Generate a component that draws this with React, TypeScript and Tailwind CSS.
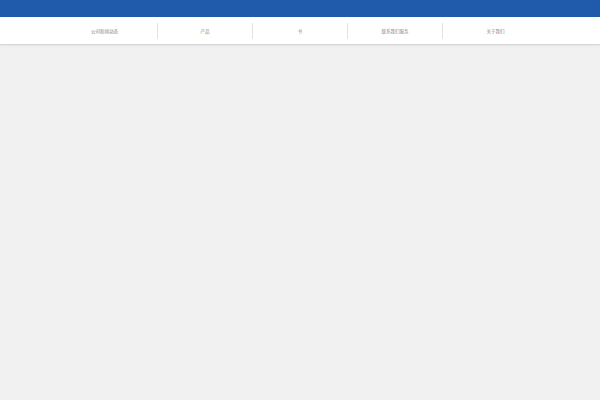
import React from 'react';

const navItems = [
  { label: '公司新闻动态', width: 'w-[105px]' },
  { label: '产品', width: 'w-[95px]' },
  { label: '书', width: 'w-[95px]' },
  { label: '联系我们服务', width: 'w-[95px]' },
  { label: '关于我们', width: 'w-[106px]' },
];

export default function App() {
  return (
    <div
      className="min-h-[400px] bg-[#f1f1f1]"
      style={{ fontFamily: '"Noto Sans CJK SC", "Noto Sans", sans-serif' }}
    >
      <div className="h-[17px] bg-[#1f5aab]" />
      <nav className="h-[28px] bg-white border-b border-[#d8d8d8] shadow-[0_1px_2px_rgba(0,0,0,0.06)] flex justify-center items-center">
        {navItems.map((item, i) => (
          <div
            key={item.label}
            className={`${item.width} h-[16px] pt-[1px] flex items-center justify-center ${
              i > 0 ? 'border-l border-[#e2e2e2]' : ''
            }`}
          >
            <span className="text-[4.5px] leading-none text-[#858585]">{item.label}</span>
          </div>
        ))}
      </nav>
    </div>
  );
}
